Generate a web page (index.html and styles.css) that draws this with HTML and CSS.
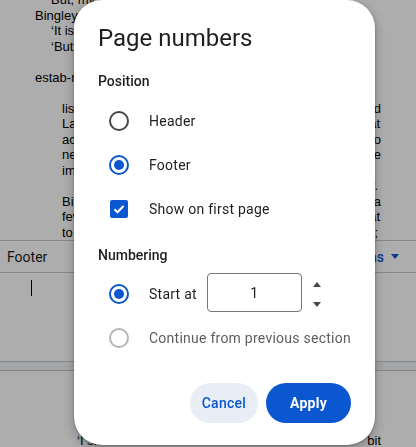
FILE: index.html
```html
<!DOCTYPE html>
<html lang="en">
<head>
  <meta charset="UTF-8" />
  <title>Page numbers</title>
  <link rel="stylesheet" href="styles.css">
</head>
<body>
  <!-- document behind the dialog -->
  <div class="doc">
    <div class="text">
      <div class="line in2"><span>But, my dear</span><span></span></div>
      <div class="line in1"><span>Bingley will</span><span></span></div>
      <div class="line in2"><span>‘It is more</span><span></span></div>
      <div class="line in2"><span>‘But consider</span><span></span></div>
      <div class="line"></div>
      <div class="line in1"><span>estab-rishment</span><span></span></div>
      <div class="line"></div>
      <div class="line in3"><span>listened</span><span>and</span></div>
      <div class="line in3 end-t"><span>Lady Lucas</span><span>that</span></div>
      <div class="line in3"><span>accept</span><span>to</span></div>
      <div class="line in3"><span>never</span><span>the</span></div>
      <div class="line in3"><span>impossible</span><span></span></div>
      <div class="line in3 end-dot"><span></span><span>day.</span></div>
      <div class="line in3"><span>Bingley</span><span>a</span></div>
      <div class="line in3 end-t"><span>few</span><span>that</span></div>
      <div class="line in3 end-semi"><span>to</span><span>it;</span></div>
    </div>

    <div class="footer-bar">
      <span>Footer</span>
      <span class="options">Options
        <svg width="8" height="5" viewBox="0 0 8 5"><path d="M0 0h8L4 5z" fill="currentColor"/></svg>
      </span>
    </div>
    <div class="footer-body"><span class="caret"></span></div>
    <div class="page-gap"></div>
    <div class="text next">
      <div class="line"><span class="quote">‘I shall</span><span>bit</span></div>
    </div>
  </div>

  <div class="scrim"></div>

  <div class="dialog">
    <h2>Page numbers</h2>

    <div class="section">Position</div>
    <div class="option">
      <span class="slot"><span class="radio"></span></span>
      <span>Header</span>
    </div>
    <div class="option">
      <span class="slot"><span class="radio checked"></span></span>
      <span>Footer</span>
    </div>
    <div class="option">
      <span class="slot">
        <span class="checkbox">
          <svg width="14" height="14" viewBox="0 0 14 14"><path d="M2.5 7.2l3 3 6-6.2" fill="none" stroke="#fff" stroke-width="2"/></svg>
        </span>
      </span>
      <span>Show on first page</span>
    </div>

    <div class="section numbering">Numbering</div>
    <div class="option">
      <span class="slot"><span class="radio checked"></span></span>
      <span>Start at</span>
      <span class="number">1</span>
      <span class="spinner">
        <svg width="8" height="5" viewBox="0 0 8 5"><path d="M0 5h8L4 0z" fill="#444746"/></svg>
        <svg width="8" height="5" viewBox="0 0 8 5"><path d="M0 0h8L4 5z" fill="#444746"/></svg>
      </span>
    </div>
    <div class="option disabled">
      <span class="slot"><span class="radio"></span></span>
      <span>Continue from previous section</span>
    </div>

    <div class="actions">
      <button class="cancel">Cancel</button>
      <button class="apply">Apply</button>
    </div>
  </div>
</body>
</html>
```

FILE: styles.css
```css
body {
  margin: 0;
  width: 416px;
  height: 447px;
  overflow: hidden;
  background: #fff;
  font-family: Roboto, "Liberation Sans", sans-serif;
  color: #1f1f1f;
}

/* document page */
.doc {
  width: 416px;
}
.text {
  margin-top: -7.75px;
  font-family: "Liberation Sans", Arial, sans-serif;
  font-size: 13px;
  color: #000;
}
.line {
  display: flex;
  justify-content: space-between;
  height: 15.5px;
  line-height: 15.5px;
  padding-right: 35px;
  white-space: nowrap;
}
.in1 { padding-left: 35px; }
.in2 { padding-left: 51px; }
.in3 { padding-left: 62px; }
.line.end-t { padding-right: 36px; }
.line.end-dot { padding-right: 38px; }
.line.end-semi { padding-right: 38px; }

.footer-bar {
  display: flex;
  justify-content: space-between;
  align-items: center;
  height: 31px;
  padding: 0 17px 0 7px;
  border-top: 1px solid #c4c7c5;
  border-bottom: 1px solid #c4c7c5;
  font-size: 14px;
}
.options {
  display: flex;
  align-items: center;
  gap: 7px;
  color: #0b57d0;
  font-weight: 500;
}
.footer-body {
  height: 88px;
  padding: 7px 0 0 31px;
  box-sizing: border-box;
}
.caret {
  display: block;
  width: 1px;
  height: 16px;
  background: #000;
}
.page-gap {
  height: 8px;
  background: #f0f4f9;
  border-top: 1px solid #c4c7c5;
  border-bottom: 1px solid #c4c7c5;
}
.text.next {
  margin-top: 62px;
}
.text.next .line {
  padding-left: 77px;
  padding-right: 35px;
}

.scrim {
  position: fixed;
  inset: 0;
  background: rgba(0, 0, 0, 0.32);
}

/* dialog */
.dialog {
  position: absolute;
  left: 74px;
  top: 0;
  width: 301px;
  box-sizing: border-box;
  padding: 22px 24px 22px;
  background: #fff;
  border-radius: 28px;
  box-shadow: 0 4px 8px 3px rgba(0, 0, 0, 0.15), 0 1px 3px rgba(0, 0, 0, 0.3);
  font-size: 14px;
}
.dialog h2 {
  margin: 0;
  font-size: 24px;
  font-weight: 400;
  line-height: 32px;
  color: #1f1f1f;
}
.section {
  margin-top: 16.5px;
  margin-bottom: 8.5px;
  line-height: 20px;
  font-weight: 500;
}
.section.numbering {
  margin-top: 14px;
  margin-bottom: 7px;
}
.option {
  display: flex;
  align-items: center;
  height: 44px;
  letter-spacing: 0.25px;
}
.slot {
  display: flex;
  justify-content: center;
  width: 20px;
  margin: 0 20px 0 11px;
}
.radio {
  display: grid;
  place-items: center;
  width: 20px;
  height: 20px;
  box-sizing: border-box;
  border: 2px solid #444746;
  border-radius: 50%;
}
.radio.checked {
  border-color: #0b57d0;
}
.radio.checked::after {
  content: "";
  width: 10px;
  height: 10px;
  border-radius: 50%;
  background: #0b57d0;
}
.checkbox {
  display: grid;
  place-items: center;
  width: 18px;
  height: 18px;
  border-radius: 2px;
  background: #0b57d0;
}
.disabled {
  color: #5e5e5e;
}
.disabled .radio {
  border-color: #b4b5b4;
}

.number {
  display: flex;
  justify-content: center;
  align-items: center;
  width: 95px;
  height: 39px;
  margin: -3px 0 0 10px;
  box-sizing: border-box;
  border: 1px solid #747775;
  border-radius: 4px;
}
.spinner {
  display: flex;
  flex-direction: column;
  gap: 15px;
  margin-left: 11px;
}

.actions {
  display: flex;
  justify-content: flex-end;
  gap: 8px;
  margin-top: 23px;
}
.actions button {
  height: 40px;
  border: none;
  border-radius: 20px;
  font-family: Roboto, sans-serif;
  font-size: 14px;
  letter-spacing: 0.25px;
  cursor: pointer;
}
.cancel {
  padding: 0 12px;
  background: #e9eef6;
  color: #0b57d0;
  font-weight: 500;
}
.apply {
  padding: 0 24px;
  background: #0b57d0;
  color: #fff;
  font-weight: 700;
}
```
